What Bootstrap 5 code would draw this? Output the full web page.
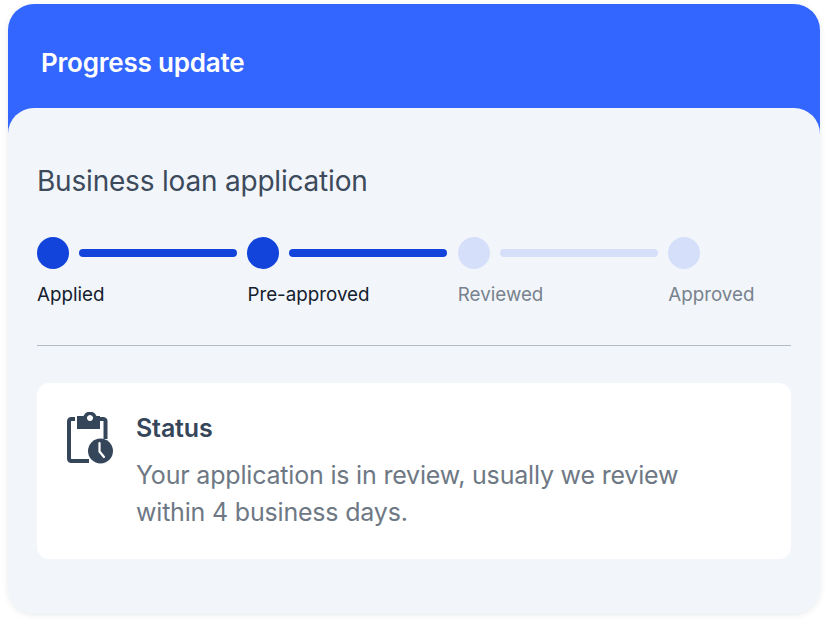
<!doctype html>
<html lang="en">
<head>
<meta charset="utf-8">
<title>Progress update</title>
<link href="https://cdn.jsdelivr.net/npm/bootstrap@5.3.0/dist/css/bootstrap.min.css" rel="stylesheet">
<style>
html,body{height:625px;overflow:hidden;background:#fff;font-family:"Inter","Liberation Sans",sans-serif}
.sheet{margin:4px 8px 0;width:812px;height:609px;background:linear-gradient(#36f 0,#36f 140px,#f2f6fa 140px);border-radius:26px;box-shadow:0 2px 6px rgba(30,50,80,.1)}
.sheet-head{height:104px;padding:12px 0 0 33px;color:#fff;font-size:26px;font-weight:600;letter-spacing:-.2px}
.sheet-body{height:505px;background:#f2f6fa;border-radius:26px;padding:53px 29px 0}
.loan-title{font-size:28px;line-height:40px;font-weight:400;color:#3c4a5c;letter-spacing:-.2px;margin:0}
.steps{margin-top:36px;display:grid;grid-template-columns:210.4px 210.4px 210.4px 1fr}
.dot{width:32px;height:32px;border-radius:50%;background:#1244dc;flex:none}
.bar{width:158px;height:8px;border-radius:4px;background:#1244dc;margin-left:10px}
.pending .dot,.pending .bar{background:#d6dffa}
.step-label{margin-top:14px;font-size:18.8px;line-height:24px;color:#14202e;white-space:nowrap}
.pending .step-label{color:#78828e}
.rule{margin:38px 0 37px;border-top:1px solid #b4bac1;opacity:1}
.status-box{height:176px;background:#fff;border-radius:12px;padding:29px 30px 0}
.status-icon{width:46px;height:52px;flex:none}
.status-gap{gap:23px}
.status-name{font-size:25px;line-height:32px;font-weight:600;color:#36465a;letter-spacing:-.15px}
.status-text{font-size:25px;line-height:37px;color:#6e7884;letter-spacing:-.19px;margin:13px 0 0}
</style>
</head>
<body>
<div class="sheet">
  <div class="sheet-head d-flex align-items-center">Progress update</div>
  <div class="sheet-body">
    <h1 class="loan-title">Business loan application</h1>
    <div class="steps">
      <div><div class="d-flex align-items-center"><span class="dot"></span><span class="bar"></span></div><div class="step-label">Applied</div></div>
      <div><div class="d-flex align-items-center"><span class="dot"></span><span class="bar"></span></div><div class="step-label">Pre-approved</div></div>
      <div class="pending"><div class="d-flex align-items-center"><span class="dot"></span><span class="bar"></span></div><div class="step-label">Reviewed</div></div>
      <div class="pending"><div class="d-flex align-items-center"><span class="dot"></span></div><div class="step-label">Approved</div></div>
    </div>
    <hr class="rule">
    <div class="status-box d-flex status-gap">
      <svg class="status-icon" viewBox="0 0 46 52" aria-hidden="true">
        <path d="M8 7H4A2.500 2.500 0 0 0 2 9.500V46.500A2.500 2.500 0 0 0 4 49H22" fill="none" stroke="#36465a" stroke-width="4"/>
        <path d="M32 7h4.500a2 2 0 0 1 2 2.500V27" fill="none" stroke="#36465a" stroke-width="4"/>
        <path fill-rule="evenodd" fill="#36465a" d="M10 4h6.500a7 7 0 0 1 13 0H33v13H10Zm13-1a3 3 0 1 0 .01 0Z"/>
        <circle cx="33.500" cy="39" r="12.500" fill="#36465a"/>
        <path d="M32.500 31v8.500l4.500 5.500" fill="none" stroke="#fff" stroke-width="2.200" stroke-linecap="round"/>
      </svg>
      <div>
        <div class="status-name">Status</div>
        <p class="status-text">Your application is in review, usually we review<br>within 4 business days.</p>
      </div>
    </div>
  </div>
</div>
<script src="https://cdn.jsdelivr.net/npm/bootstrap@5.3.0/dist/js/bootstrap.bundle.min.js"></script>
</body>
</html>
